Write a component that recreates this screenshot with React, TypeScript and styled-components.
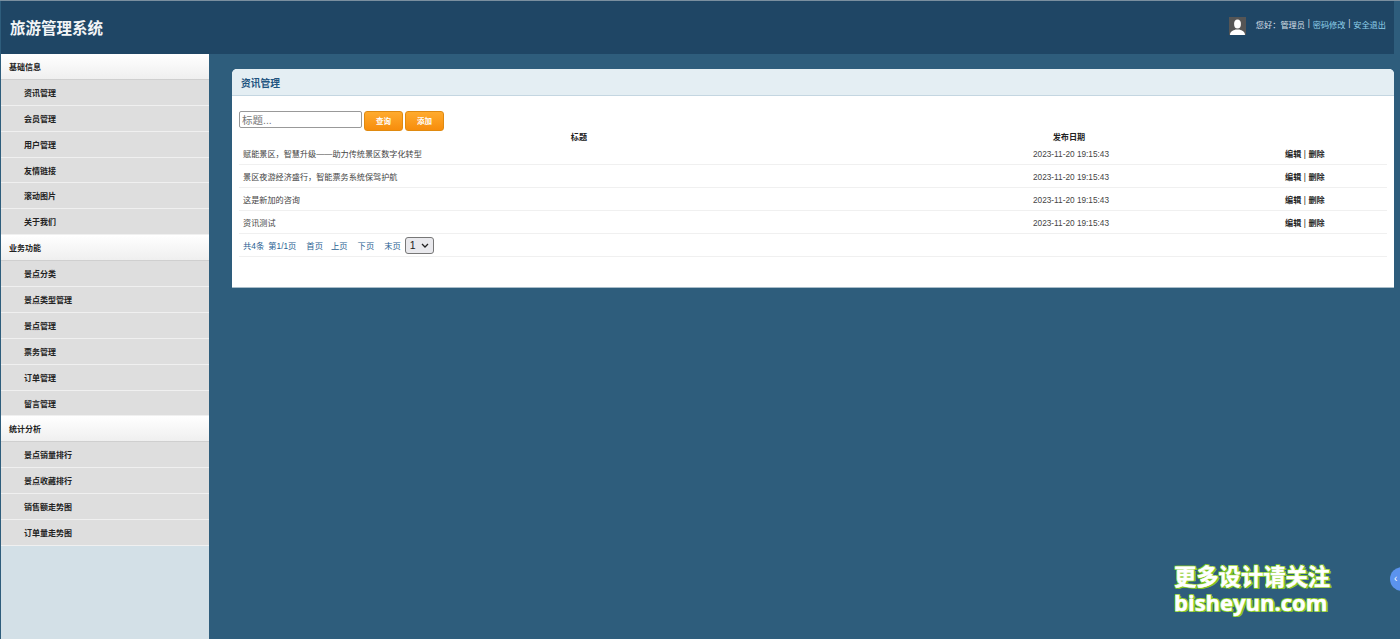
import React from "react";
import styled, { createGlobalStyle } from "styled-components";

const Global = createGlobalStyle`
  html, body { margin: 0; padding: 0; height: 100%; overflow: hidden; }
  body { background: #2e5d7c; font-family: "Liberation Sans", "Noto Sans CJK SC", sans-serif; }
  * { box-sizing: border-box; }
`;

const Page = styled.div`
  position: relative;
  height: 639px;
  width: 1400px;
  overflow: hidden;
  display: flex;
  flex-direction: column;
  background: #2e5d7c;
  border-top: 1px solid #7a8f9f;
`;
const Header = styled.header`
  height: 53px;
  margin: 0 6px 0 1px;
  background: #1f4665;
  display: flex;
  align-items: center;
  justify-content: space-between;
  padding: 0 8px 0 9px;
`;
const Logo = styled.h1`
  margin: -2px 0 0;
  font-size: 15.5px;
  font-weight: 700;
  color: #f2f5f7;
`;
const UserBar = styled.div`
  display: flex;
  align-items: center;
  font-size: 8.2px;
  color: #d5dfe6;
  margin-top: -8px;
`;
const Avatar = styled.svg`
  width: 17px;
  height: 18px;
  margin-right: 10px;
  margin-top: 5px;
`;
const UserLink = styled.span`
  color: #8fd0ea;
`;
const Sep = styled.span`
  margin: 0 2.8px;
`;
const Main = styled.div`
  flex: 1;
  display: flex;
  min-height: 0;
`;
const Sidebar = styled.nav`
  width: 208px;
  margin-left: 1px;
  background: #d3e0e7;
  display: flex;
  flex-direction: column;
`;
const Section = styled.div`
  height: 25.9px;
  padding-left: 8px;
  display: flex;
  align-items: center;
  font-size: 8px;
  font-weight: 700;
  color: #222;
  background: linear-gradient(#ffffff, #efefef);
  border-bottom: 1px solid #cfcfcf;
`;
const Item = styled.div`
  height: 25.9px;
  padding-left: 23px;
  display: flex;
  align-items: center;
  font-size: 8px;
  font-weight: 700;
  color: #222;
  background: #dedede;
  border-bottom: 1px solid #f0f0f0;
`;
const Content = styled.main`
  flex: 1;
  padding: 15px 6px 0 23px;
`;
const Card = styled.section`
  height: 219px;
  background: #fff;
  border-radius: 5px 5px 0 0;
  border-bottom: 1px solid #a9bdc9;
`;
const CardTitle = styled.div`
  height: 27px;
  padding: 1px 0 0 9px;
  display: flex;
  align-items: center;
  font-size: 9.75px;
  font-weight: 700;
  color: #1f5480;
  background: #e4eef3;
  border-bottom: 1px solid #c4d6e1;
  border-radius: 5px 5px 0 0;
`;
const CardBody = styled.div`
  padding: 15px 7px 0;
`;
const Toolbar = styled.div`
  display: flex;
  align-items: flex-start;
  height: 20px;
`;
const Search = styled.input`
  width: 123px;
  height: 17px;
  padding: 0 2px;
  font: 10.5px "Liberation Sans", "Noto Sans CJK SC", sans-serif;
  border: 1px solid #999;
  border-radius: 2px;
  background: #fff;
  outline: none;
  margin-right: 2px;
  &::placeholder { color: #777; }
`;
const OrangeButton = styled.button`
  width: 39px;
  height: 20px;
  margin-right: 2px;
  padding: 0 0 2px;
  border: 1px solid #e08a10;
  border-radius: 3px;
  background: linear-gradient(#ffab2e, #f78d0c);
  color: #fff;
  font: 700 7.5px "Liberation Sans", "Noto Sans CJK SC", sans-serif;
`;
const Row = styled.div<{ $head?: boolean }>`
  display: grid;
  grid-template-columns: 680px 300px 1fr;
  align-items: center;
  height: ${(p) => (p.$head ? "11px" : "23px")};
  font-size: 8.15px;
  color: ${(p) => (p.$head ? "#222" : "#444")};
  font-weight: ${(p) => (p.$head ? 700 : 400)};
  border-bottom: ${(p) => (p.$head ? "none" : "1px solid #f0f0f0")};
`;
const HeadCell = styled.div`
  text-align: center;
`;
const TitleCell = styled.div`
  padding-left: 4px;
`;
const DateCell = styled.div`
  text-align: center;
  padding: 2px 0 0 4px;
  font-size: 8.25px;
`;
const OpsCell = styled.div`
  padding-left: 66px;
  color: #222;
  font-weight: 700;
`;
const OpsSep = styled.span`
  font-weight: 400;
  margin: 0 2.5px;
`;
const Pager = styled.div`
  display: flex;
  align-items: center;
  height: 23px;
  padding-left: 4px;
  font-size: 8.3px;
  color: #2a5f92;
  border-bottom: 1px solid #f0f0f0;
`;
const PageLink = styled.span<{ $gap: number }>`
  margin-right: ${(p) => p.$gap}px;
`;
const SelectWrap = styled.span`
  position: relative;
  display: inline-flex;
`;
const PageSelect = styled.select`
  appearance: none;
  width: 29px;
  height: 17px;
  padding: 0 0 0 4px;
  font: 10.5px "Liberation Sans", sans-serif;
  color: #222;
  background: #e9e9ed;
  border: 1px solid #777;
  border-radius: 3px;
`;
const Chevron = styled.svg`
  position: absolute;
  right: 5px;
  top: 6px;
  width: 8px;
  height: 5px;
  pointer-events: none;
`;
const Watermark = styled.div`
  position: absolute;
  left: 1174px;
  top: 564px;
  width: 160px;
  color: #fff;
  font-weight: 700;
  font-size: 22.3px;
  line-height: 25px;
  white-space: nowrap;
  -webkit-text-stroke: 0.5px #fff;
  text-shadow: 1px 1px 0 #84c81f, -1px -1px 0 #84c81f, 1px -1px 0 #84c81f, -1px 1px 0 #84c81f, 2px 1px 0 #84c81f;
`;
const WatermarkUrl = styled.div`
  font-size: 22px;
  font-family: "Open Sans", "Liberation Sans", sans-serif;
`;
const Bubble = styled.div`
  position: absolute;
  left: 1390px;
  top: 566px;
  width: 24px;
  height: 24px;
  border-radius: 50%;
  background: #5b93ee;
  color: #fff;
  font-size: 10px;
  line-height: 24px;
  padding-left: 4px;
`;

const menu: { title: string; items: string[] }[] = [
  { title: "基础信息", items: ["资讯管理", "会员管理", "用户管理", "友情链接", "滚动图片", "关于我们"] },
  { title: "业务功能", items: ["景点分类", "景点类型管理", "景点管理", "票务管理", "订单管理", "留言管理"] },
  { title: "统计分析", items: ["景点销量排行", "景点收藏排行", "销售额走势图", "订单量走势图"] },
];
const news = ["赋能景区，智慧升级——助力传统景区数字化转型", "景区夜游经济盛行，智能票务系统保驾护航", "这是新加的咨询", "资讯测试"];

export default function App() {
  return (
    <Page>
      <Global />
      <Header>
        <Logo>旅游管理系统</Logo>
        <UserBar>
          <Avatar viewBox="0 0 17 18">
            <rect width="17" height="18" fill="#555" />
            <ellipse cx="8.5" cy="7" rx="3.4" ry="4.6" fill="#fff" />
            <path d="M1 18c0-3.500 3-4.500 5.500-5.500h4c2.500 1 5.500 2 5.500 5.500z" fill="#fff" />
          </Avatar>
          您好：管理员<Sep>|</Sep>
          <UserLink>密码修改</UserLink>
          <Sep>|</Sep>
          <UserLink>安全退出</UserLink>
        </UserBar>
      </Header>
      <Main>
        <Sidebar>
          {menu.map((g) => (
            <React.Fragment key={g.title}>
              <Section>{g.title}</Section>
              {g.items.map((i) => (
                <Item key={i}>{i}</Item>
              ))}
            </React.Fragment>
          ))}
        </Sidebar>
        <Content>
          <Card>
            <CardTitle>资讯管理</CardTitle>
            <CardBody>
              <Toolbar>
                <Search placeholder="标题..." />
                <OrangeButton>查询</OrangeButton>
                <OrangeButton>添加</OrangeButton>
              </Toolbar>
              <Row $head>
                <HeadCell>标题</HeadCell>
                <HeadCell>发布日期</HeadCell>
                <HeadCell />
              </Row>
              {news.map((n) => (
                <Row key={n}>
                  <TitleCell>{n}</TitleCell>
                  <DateCell>2023-11-20 19:15:43</DateCell>
                  <OpsCell>
                    编辑<OpsSep>|</OpsSep>删除
                  </OpsCell>
                </Row>
              ))}
              <Pager>
                <PageLink $gap={4}>共4条</PageLink>
                <PageLink $gap={10}>第1/1页</PageLink>
                <PageLink $gap={8}>首页</PageLink>
                <PageLink $gap={10}>上页</PageLink>
                <PageLink $gap={10}>下页</PageLink>
                <PageLink $gap={4}>末页</PageLink>
                <SelectWrap>
                  <PageSelect defaultValue="1">
                    <option value="1">1</option>
                  </PageSelect>
                  <Chevron viewBox="0 0 8 5">
                    <path d="M1 1l3 3 3-3" fill="none" stroke="#222" strokeWidth="1.300" />
                  </Chevron>
                </SelectWrap>
              </Pager>
            </CardBody>
          </Card>
        </Content>
      </Main>
      <Watermark>
        更多设计请关注
        <WatermarkUrl>bisheyun.com</WatermarkUrl>
      </Watermark>
      <Bubble>‹</Bubble>
    </Page>
  );
}
